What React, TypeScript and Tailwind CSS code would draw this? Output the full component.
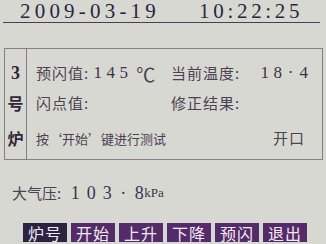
import React from "react";

const cjk = "font-['Noto_Sans_CJK_SC',sans-serif]";
const serif = "font-['Liberation_Serif','Noto_Sans_CJK_SC',serif]";

function Cells({ text, cell, className }: { text: string; cell: string; className?: string }) {
  return (
    <span className="inline-flex">
      {text.split("").map((c, i) => (
        <span key={i} className={`inline-block text-center ${cell} ${className ?? ""}`}>
          {c === " " ? "\u00a0" : c}
        </span>
      ))}
    </span>
  );
}

function Btn({ label, dark }: { label: string; dark?: boolean }) {
  return (
    <div
      className={`w-[44px] h-[19px] flex items-center justify-center ${cjk} text-[16px] leading-none text-[#f2eaf2] tracking-[1px] ${
        dark ? "bg-[#2c2242]" : "bg-[#552a68]"
      }`}
    >
      {label}
    </div>
  );
}

export default function App() {
  return (
    <div className="w-[326px] h-[244px] bg-[#d8d8d3] overflow-hidden flex flex-col text-[#4a4252]">
      {/* header */}
      <div className="h-[23px] ml-[3px] mr-[6px] border-b border-[#4a3c5c] flex items-start">
        <div className={`pl-[17px] ${serif} text-[21px] leading-[23.5px] text-[#2a2640] flex whitespace-nowrap`}>
          <span className="tracking-[4.2px]">2009-03-19</span>
          <span className="ml-[39px] tracking-[3.7px]">10:22:25</span>
        </div>
      </div>

      {/* box */}
      <div className="mt-[25px] ml-[4px] w-[319px] h-[112px] border border-[#857c8c] flex">
        <div className="w-[22px] border-r border-[#857c8c] flex flex-col pt-[9px]">
          <div className={`h-[30px] flex items-center justify-center ${serif} font-bold text-[18px] text-[#2e2838]`}>3</div>
          <div className={`h-[30px] flex items-center justify-center ${cjk} font-bold text-[16px] text-[#2e2838]`}>号</div>
          <div className={`h-[30px] mt-[5px] flex items-center justify-center ${cjk} font-bold text-[16px] text-[#2e2838]`}>炉</div>
        </div>
        <div className="flex-1 flex flex-col pt-[9px] pl-[9px]">
          <div className="h-[30px] flex items-center">
            <div className="w-[135px] flex items-center">
              <span className={`${cjk} text-[15px] tracking-[1px]`}>预闪值:</span>
              <span className="ml-[2px]">
                <Cells text="145" cell="w-[13px]" className={`${serif} text-[17px] text-[#3a3448]`} />
              </span>
              <span className={`ml-[6px] ${cjk} text-[19px] leading-none`}>℃</span>
            </div>
            <span className={`${cjk} text-[15px] tracking-[1px]`}>当前温度:</span>
            <span className="ml-[18px]">
              <Cells text="18·4" cell="w-[13px]" className={`${serif} text-[17px] text-[#3a3448]`} />
            </span>
          </div>
          <div className="h-[30px] flex items-center">
            <div className="w-[135px]">
              <span className={`${cjk} text-[15px] tracking-[1px]`}>闪点值:</span>
            </div>
            <span className={`${cjk} text-[15px] tracking-[1px]`}>修正结果:</span>
          </div>
          <div className="h-[30px] mt-[5px] flex items-center">
            <div className="w-[237px]">
              <span className={`${cjk} text-[13px]`}>按‘开始’键进行测试</span>
            </div>
            <span className={`${cjk} text-[15px] tracking-[1px]`}>开口</span>
          </div>
        </div>
      </div>

      {/* pressure */}
      <div className="mt-[23px] ml-[12px] h-[20px] flex items-center">
        <span className={`${cjk} text-[15px]`}>大气压:</span>
        <span className="ml-[6px]">
          <Cells text="103·8" cell="w-[16px]" className={`${serif} text-[18px] text-[#3a3448]`} />
        </span>
        <span className={`-ml-[3px] ${serif} text-[13px] text-[#3a3448]`}>kPa</span>
      </div>

      {/* buttons */}
      <div className="mt-[20px] ml-[23px] flex gap-[4px]">
        <Btn label="炉号" dark />
        <Btn label="开始" />
        <Btn label="上升" />
        <Btn label="下降" />
        <Btn label="预闪" />
        <Btn label="退出" />
      </div>
    </div>
  );
}
